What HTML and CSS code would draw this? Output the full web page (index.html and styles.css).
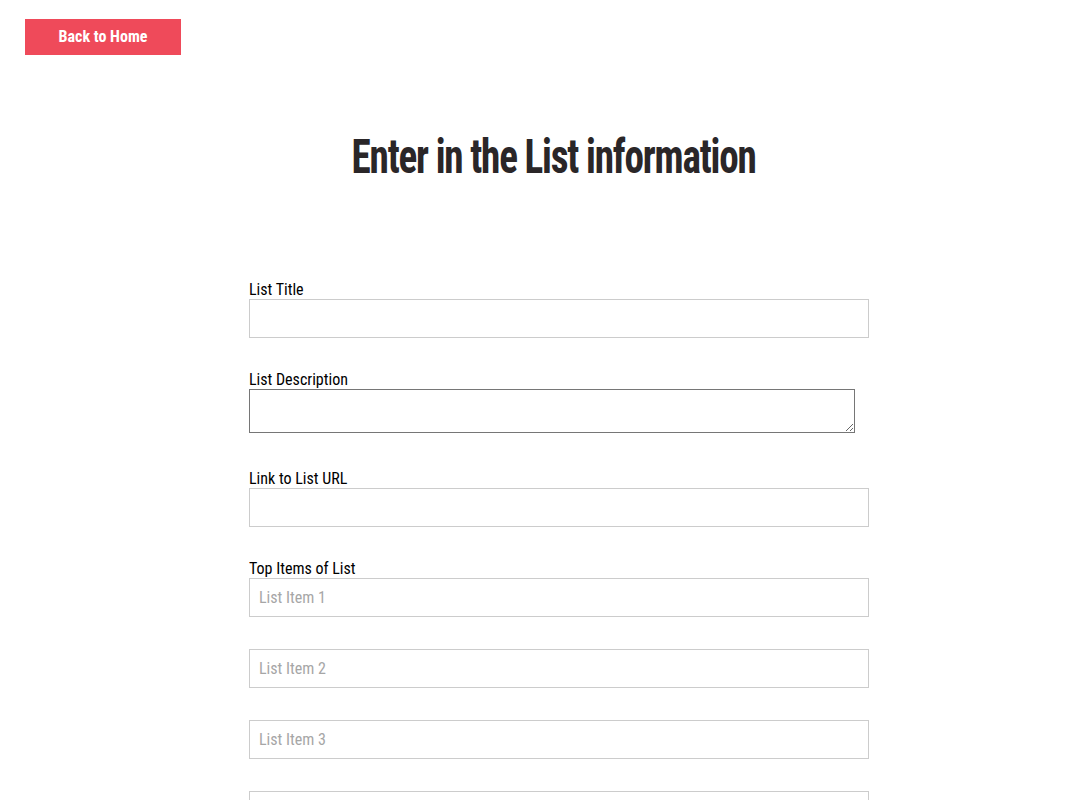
FILE: index.html
```html
<!DOCTYPE html>
<html lang="en">
<head>
<meta charset="utf-8">
<title>Enter in the List information</title>
<link rel="stylesheet" href="styles.css">
</head>
<body>
<header class="top">
  <a class="home-btn" href="#">Back to Home</a>
</header>
<h1 class="title"><span class="title-text">Enter in the List information</span></h1>
<form class="list-form">
  <div class="group">
    <label class="label" for="t">List Title</label>
    <input class="field" id="t" type="text">
  </div>
  <div class="group group-area">
    <label class="label" for="d">List Description</label>
    <textarea class="area" id="d"></textarea>
  </div>
  <div class="group">
    <label class="label" for="u">Link to List URL</label>
    <input class="field" id="u" type="text">
  </div>
  <div class="group items">
    <label class="label" for="i1">Top Items of List</label>
    <input class="field" id="i1" type="text" placeholder="List Item 1">
    <input class="field" type="text" placeholder="List Item 2">
    <input class="field" type="text" placeholder="List Item 3">
    <input class="field" type="text" placeholder="List Item 4">
  </div>
</form>
</body>
</html>
```
FILE: styles.css
```css
html, body {
  margin: 0;
  padding: 0;
  background: #fff;
}
body {
  font-family: Roboto, "Liberation Sans", sans-serif;
  font-stretch: 87.5%;
  color: #000;
}
.top {
  padding: 19px 25px 0;
  height: 36px;
}
.home-btn {
  display: inline-block;
  width: 156px;
  height: 36px;
  line-height: 36px;
  background: #ef4a5a;
  color: #fff;
  text-align: center;
  text-decoration: none;
  font-weight: 700;
  font-size: 16px;
  font-stretch: 87.5%;
}
.title {
  margin: 74px 0 0;
  padding-left: 40px;
  text-align: center;
  font-family: Roboto, "Liberation Sans", sans-serif;
  font-stretch: 75%;
  font-weight: 700;
  font-size: 49px;
  line-height: 56px;
  letter-spacing: -1.5px;
  color: #2a2628;
}
.title-text {
  display: inline-block;
  transform: scaleX(0.8);
}
.list-form {
  width: 620px;
  margin: 97px 0 0 249px;
}
.group {
  display: flex;
  flex-direction: column;
  margin-bottom: 34px;
}
.label {
  font-size: 16px;
  line-height: 15px;
  height: 17px;
}
.field {
  box-sizing: border-box;
  width: 620px;
  height: 39px;
  margin: 0;
  padding: 0 9px;
  border: 1px solid #ccc;
  font-family: Roboto, "Liberation Sans", sans-serif;
  font-stretch: 87.5%;
  font-size: 16px;
  outline: none;
}
.field::placeholder {
  color: #a6a6a6;
}
.items .field + .field {
  margin-top: 32px;
}
.area {
  box-sizing: border-box;
  width: 606px;
  height: 44px;
  margin: 0 0 4px;
  border: 1px solid #767676;
  font-family: Roboto, "Liberation Sans", sans-serif;
}
```
